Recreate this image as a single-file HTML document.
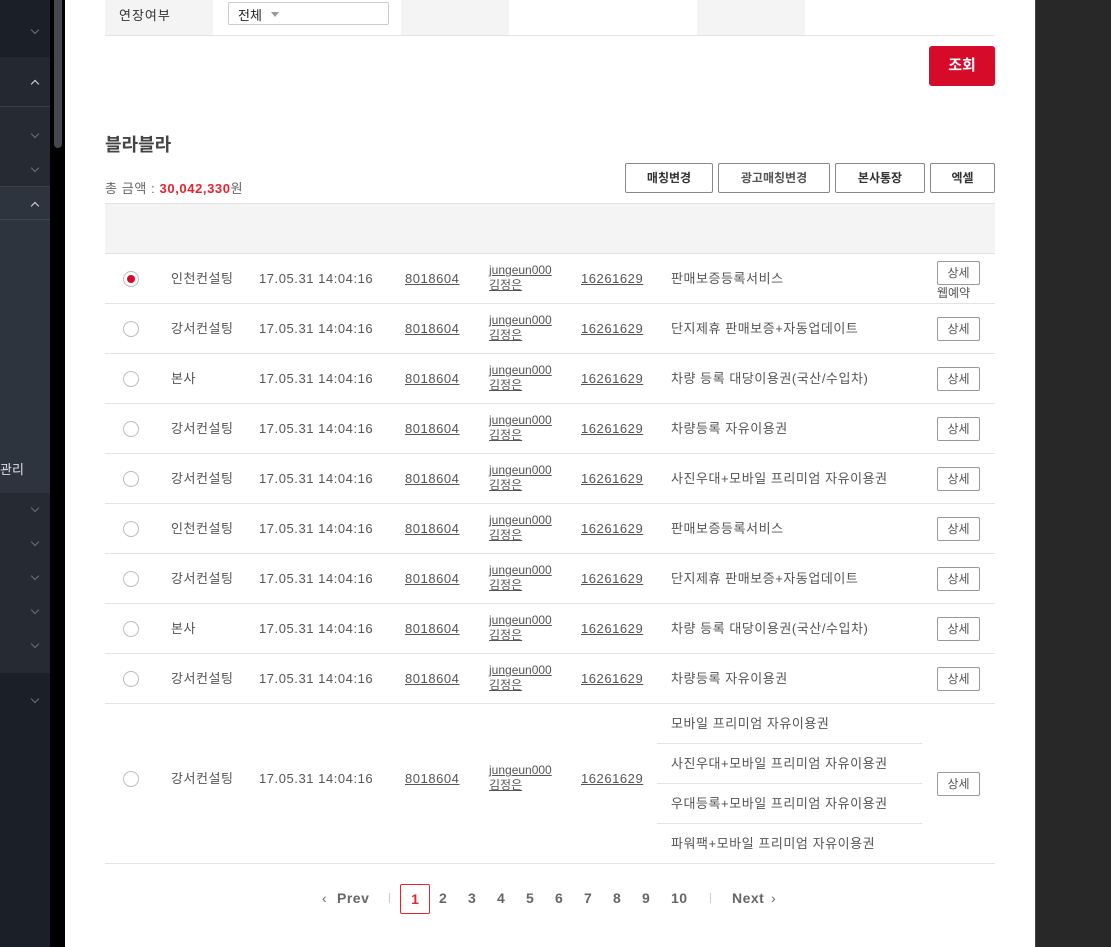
<!DOCTYPE html>
<html><head><meta charset="utf-8"><style>
*{margin:0;padding:0;box-sizing:border-box}
body{width:1111px;height:947px;overflow:hidden;background:#fff;font-family:"Liberation Sans","Noto Sans CJK KR",sans-serif;font-size:13px;color:#555;position:relative}
.a{position:absolute}
.sb{left:0;width:50px}
.chev{position:absolute;left:32px;width:6px;height:6px;border-right:1px solid #6b717b;border-bottom:1px solid #6b717b;transform:rotate(45deg)}
.up{border-color:#ddd;transform:rotate(-135deg)}
.row{position:absolute;left:105px;width:890px;height:50px;border-bottom:1px solid #e3e3e3;letter-spacing:.55px}
.row>span{position:absolute;top:0;line-height:50px;white-space:nowrap}
.u{text-decoration:underline}
.rad{position:absolute;left:18px;top:17px;width:16px;height:16px;border:1px solid #bbb;border-radius:50%;background:#fff}
.rad.on::after{content:"";position:absolute;left:3px;top:3px;width:8px;height:8px;border-radius:50%;background:#d60b2a}
.det{position:absolute;left:832px;top:13px;width:43px;height:24px;border:1px solid #999;border-radius:2px;font-size:12px;text-align:center;line-height:22px;color:#555;background:#fff;letter-spacing:0}
.usr{position:absolute;left:384px;top:9px;line-height:15px;font-size:12px;text-decoration:underline;letter-spacing:0}
.btn{position:absolute;top:163px;height:30px;border:1px solid #888;border-radius:2px;font-size:12px;font-weight:bold;color:#333;text-align:center;line-height:28px;background:#fff}
.pg{position:absolute;top:898px;font-size:14px;font-weight:bold;color:#666;transform:translateY(-50%);letter-spacing:.5px}
</style></head><body>
<div class="a sb" style="top:0;height:57px;background:#1b1f27"><div class="chev" style="top:27px"></div></div>
<div class="a sb" style="top:57px;height:50px;background:#232831;border-bottom:1px solid #3a404a"><div class="chev up" style="top:24px"></div></div>
<div class="a sb" style="top:107px;height:80px;background:#252a33"><div class="chev" style="top:24px"></div><div class="chev" style="top:58px"></div></div>
<div class="a sb" style="top:186px;height:34px;background:#2e343e;border-top:1px solid #3a404a;border-bottom:1px solid #3f4550"><div class="chev up" style="top:16px"></div></div>
<div class="a sb" style="top:220px;height:273px;background:#2e343e"><div class="a" style="left:0;top:239px;color:#dde;font-size:13px">관리</div></div>
<div class="a sb" style="top:493px;height:180px;background:#252a33"><div class="chev" style="top:12px"></div><div class="chev" style="top:46px"></div><div class="chev" style="top:80px"></div><div class="chev" style="top:114px"></div><div class="chev" style="top:148px"></div></div>
<div class="a sb" style="top:673px;height:274px;background:#1b1f27"><div class="chev" style="top:23px"></div></div>
<div class="a" style="left:50px;top:0;width:15px;height:947px;background:#000"></div>
<div class="a" style="left:54px;top:0;width:8px;height:148px;background:#45494f;border-radius:0 0 4px 4px"></div>
<div class="a" style="left:1035px;top:0;width:76px;height:947px;background:#282828;border-left:1px solid #444"></div>

<div class="a" style="left:105px;top:0;width:890px;height:36px;border-bottom:1px solid #e3e3e3"></div>
<div class="a" style="left:105px;top:0;width:108px;height:35px;background:#f4f4f4"></div>
<div class="a" style="left:119px;top:5px;color:#333;letter-spacing:1px">연장여부</div>
<div class="a" style="left:228px;top:2px;width:161px;height:23px;border:1px solid #ccc;border-radius:2px"><span class="a" style="left:9px;top:2px;color:#222">전체</span><span class="a" style="left:42px;top:9px;border:4px solid transparent;border-top:5px solid #999;border-bottom:0"></span></div>
<div class="a" style="left:401px;top:0;width:108px;height:35px;background:#f4f4f4"></div>
<div class="a" style="left:697px;top:0;width:108px;height:35px;background:#f4f4f4"></div>
<div class="a" style="left:929px;top:46px;width:66px;height:40px;background:#d60b2a;border-radius:3px;color:#fff;font-weight:bold;font-size:15px;text-align:center;line-height:40px">조회</div>

<div class="a" style="left:105px;top:131px;font-size:18px;font-weight:bold;color:#444">블라블라</div>
<div class="a" style="left:105px;top:178px;font-size:13px;color:#666;letter-spacing:.6px">총 금액 : <b style="color:#e8232f">30,042,330</b>원</div>
<div class="btn" style="left:625px;width:88px">매칭변경</div>
<div class="btn" style="left:718px;width:112px;color:#555">광고매칭변경</div>
<div class="btn" style="left:835px;width:90px">본사통장</div>
<div class="btn" style="left:930px;width:65px">엑셀</div>

<div class="a" style="left:105px;top:203px;width:890px;height:51px;background:#f4f4f4;border-top:1px solid #e3e3e3;border-bottom:1px solid #e3e3e3"></div>

<div class="row" style="top:254px"><div class="rad on"></div><span style="left:66px">인천컨설팅</span><span style="left:154px">17.05.31 14:04:16</span><span class="u" style="left:300px">8018604</span><div class="usr">jungeun000<br>김정은</div><span class="u" style="left:476px">16261629</span><span style="left:566px">판매보증등록서비스</span><div class="det" style="top:7px">상세</div><span style="left:832px;top:32px;line-height:15px;font-size:12px;letter-spacing:0">웹예약</span></div>
<div class="row" style="top:304px"><div class="rad"></div><span style="left:66px">강서컨설팅</span><span style="left:154px">17.05.31 14:04:16</span><span class="u" style="left:300px">8018604</span><div class="usr">jungeun000<br>김정은</div><span class="u" style="left:476px">16261629</span><span style="left:566px">단지제휴 판매보증+자동업데이트</span><div class="det">상세</div></div>
<div class="row" style="top:354px"><div class="rad"></div><span style="left:66px">본사</span><span style="left:154px">17.05.31 14:04:16</span><span class="u" style="left:300px">8018604</span><div class="usr">jungeun000<br>김정은</div><span class="u" style="left:476px">16261629</span><span style="left:566px">차량 등록 대당이용권(국산/수입차)</span><div class="det">상세</div></div>
<div class="row" style="top:404px"><div class="rad"></div><span style="left:66px">강서컨설팅</span><span style="left:154px">17.05.31 14:04:16</span><span class="u" style="left:300px">8018604</span><div class="usr">jungeun000<br>김정은</div><span class="u" style="left:476px">16261629</span><span style="left:566px">차량등록 자유이용권</span><div class="det">상세</div></div>
<div class="row" style="top:454px"><div class="rad"></div><span style="left:66px">강서컨설팅</span><span style="left:154px">17.05.31 14:04:16</span><span class="u" style="left:300px">8018604</span><div class="usr">jungeun000<br>김정은</div><span class="u" style="left:476px">16261629</span><span style="left:566px">사진우대+모바일 프리미엄 자유이용권</span><div class="det">상세</div></div>
<div class="row" style="top:504px"><div class="rad"></div><span style="left:66px">인천컨설팅</span><span style="left:154px">17.05.31 14:04:16</span><span class="u" style="left:300px">8018604</span><div class="usr">jungeun000<br>김정은</div><span class="u" style="left:476px">16261629</span><span style="left:566px">판매보증등록서비스</span><div class="det">상세</div></div>
<div class="row" style="top:554px"><div class="rad"></div><span style="left:66px">강서컨설팅</span><span style="left:154px">17.05.31 14:04:16</span><span class="u" style="left:300px">8018604</span><div class="usr">jungeun000<br>김정은</div><span class="u" style="left:476px">16261629</span><span style="left:566px">단지제휴 판매보증+자동업데이트</span><div class="det">상세</div></div>
<div class="row" style="top:604px"><div class="rad"></div><span style="left:66px">본사</span><span style="left:154px">17.05.31 14:04:16</span><span class="u" style="left:300px">8018604</span><div class="usr">jungeun000<br>김정은</div><span class="u" style="left:476px">16261629</span><span style="left:566px">차량 등록 대당이용권(국산/수입차)</span><div class="det">상세</div></div>
<div class="row" style="top:654px"><div class="rad"></div><span style="left:66px">강서컨설팅</span><span style="left:154px">17.05.31 14:04:16</span><span class="u" style="left:300px">8018604</span><div class="usr">jungeun000<br>김정은</div><span class="u" style="left:476px">16261629</span><span style="left:566px">차량등록 자유이용권</span><div class="det">상세</div></div>
<div class="row" style="top:704px;height:160px"><div class="rad" style="top:67px"></div><span style="left:66px;line-height:150px">강서컨설팅</span><span style="left:154px;line-height:150px">17.05.31 14:04:16</span><span class="u" style="left:300px;line-height:150px">8018604</span><div class="usr" style="top:59px">jungeun000<br>김정은</div><span class="u" style="left:476px;line-height:150px">16261629</span>
<div class="a" style="left:552px;top:0;width:265px;height:40px;border-bottom:1px solid #e3e3e3;line-height:40px;padding-left:14px">모바일 프리미엄 자유이용권</div>
<div class="a" style="left:552px;top:40px;width:265px;height:40px;border-bottom:1px solid #e3e3e3;line-height:40px;padding-left:14px">사진우대+모바일 프리미엄 자유이용권</div>
<div class="a" style="left:552px;top:80px;width:265px;height:40px;border-bottom:1px solid #e3e3e3;line-height:40px;padding-left:14px">우대등록+모바일 프리미엄 자유이용권</div>
<div class="a" style="left:552px;top:120px;width:265px;height:40px;line-height:40px;padding-left:14px">파워팩+모바일 프리미엄 자유이용권</div>
<div class="det" style="top:68px">상세</div></div>

<div class="pg" style="left:322px;font-weight:normal">‹</div>
<div class="pg" style="left:337px">Prev</div>
<div class="a" style="left:389px;top:893px;width:1px;height:10px;background:#ccc"></div>
<div class="a" style="left:400px;top:884px;width:30px;height:30px;border:1px solid #e8232f;border-radius:2px;color:#e8232f;font-weight:bold;font-size:14px;text-align:center;line-height:28px">1</div>
<div class="pg" style="left:439px">2</div>
<div class="pg" style="left:468px">3</div>
<div class="pg" style="left:497px">4</div>
<div class="pg" style="left:526px">5</div>
<div class="pg" style="left:555px">6</div>
<div class="pg" style="left:584px">7</div>
<div class="pg" style="left:613px">8</div>
<div class="pg" style="left:642px">9</div>
<div class="pg" style="left:671px">10</div>
<div class="a" style="left:710px;top:893px;width:1px;height:10px;background:#ccc"></div>
<div class="pg" style="left:732px">Next</div>
<div class="pg" style="left:771px;font-weight:normal">›</div>
</body></html>
